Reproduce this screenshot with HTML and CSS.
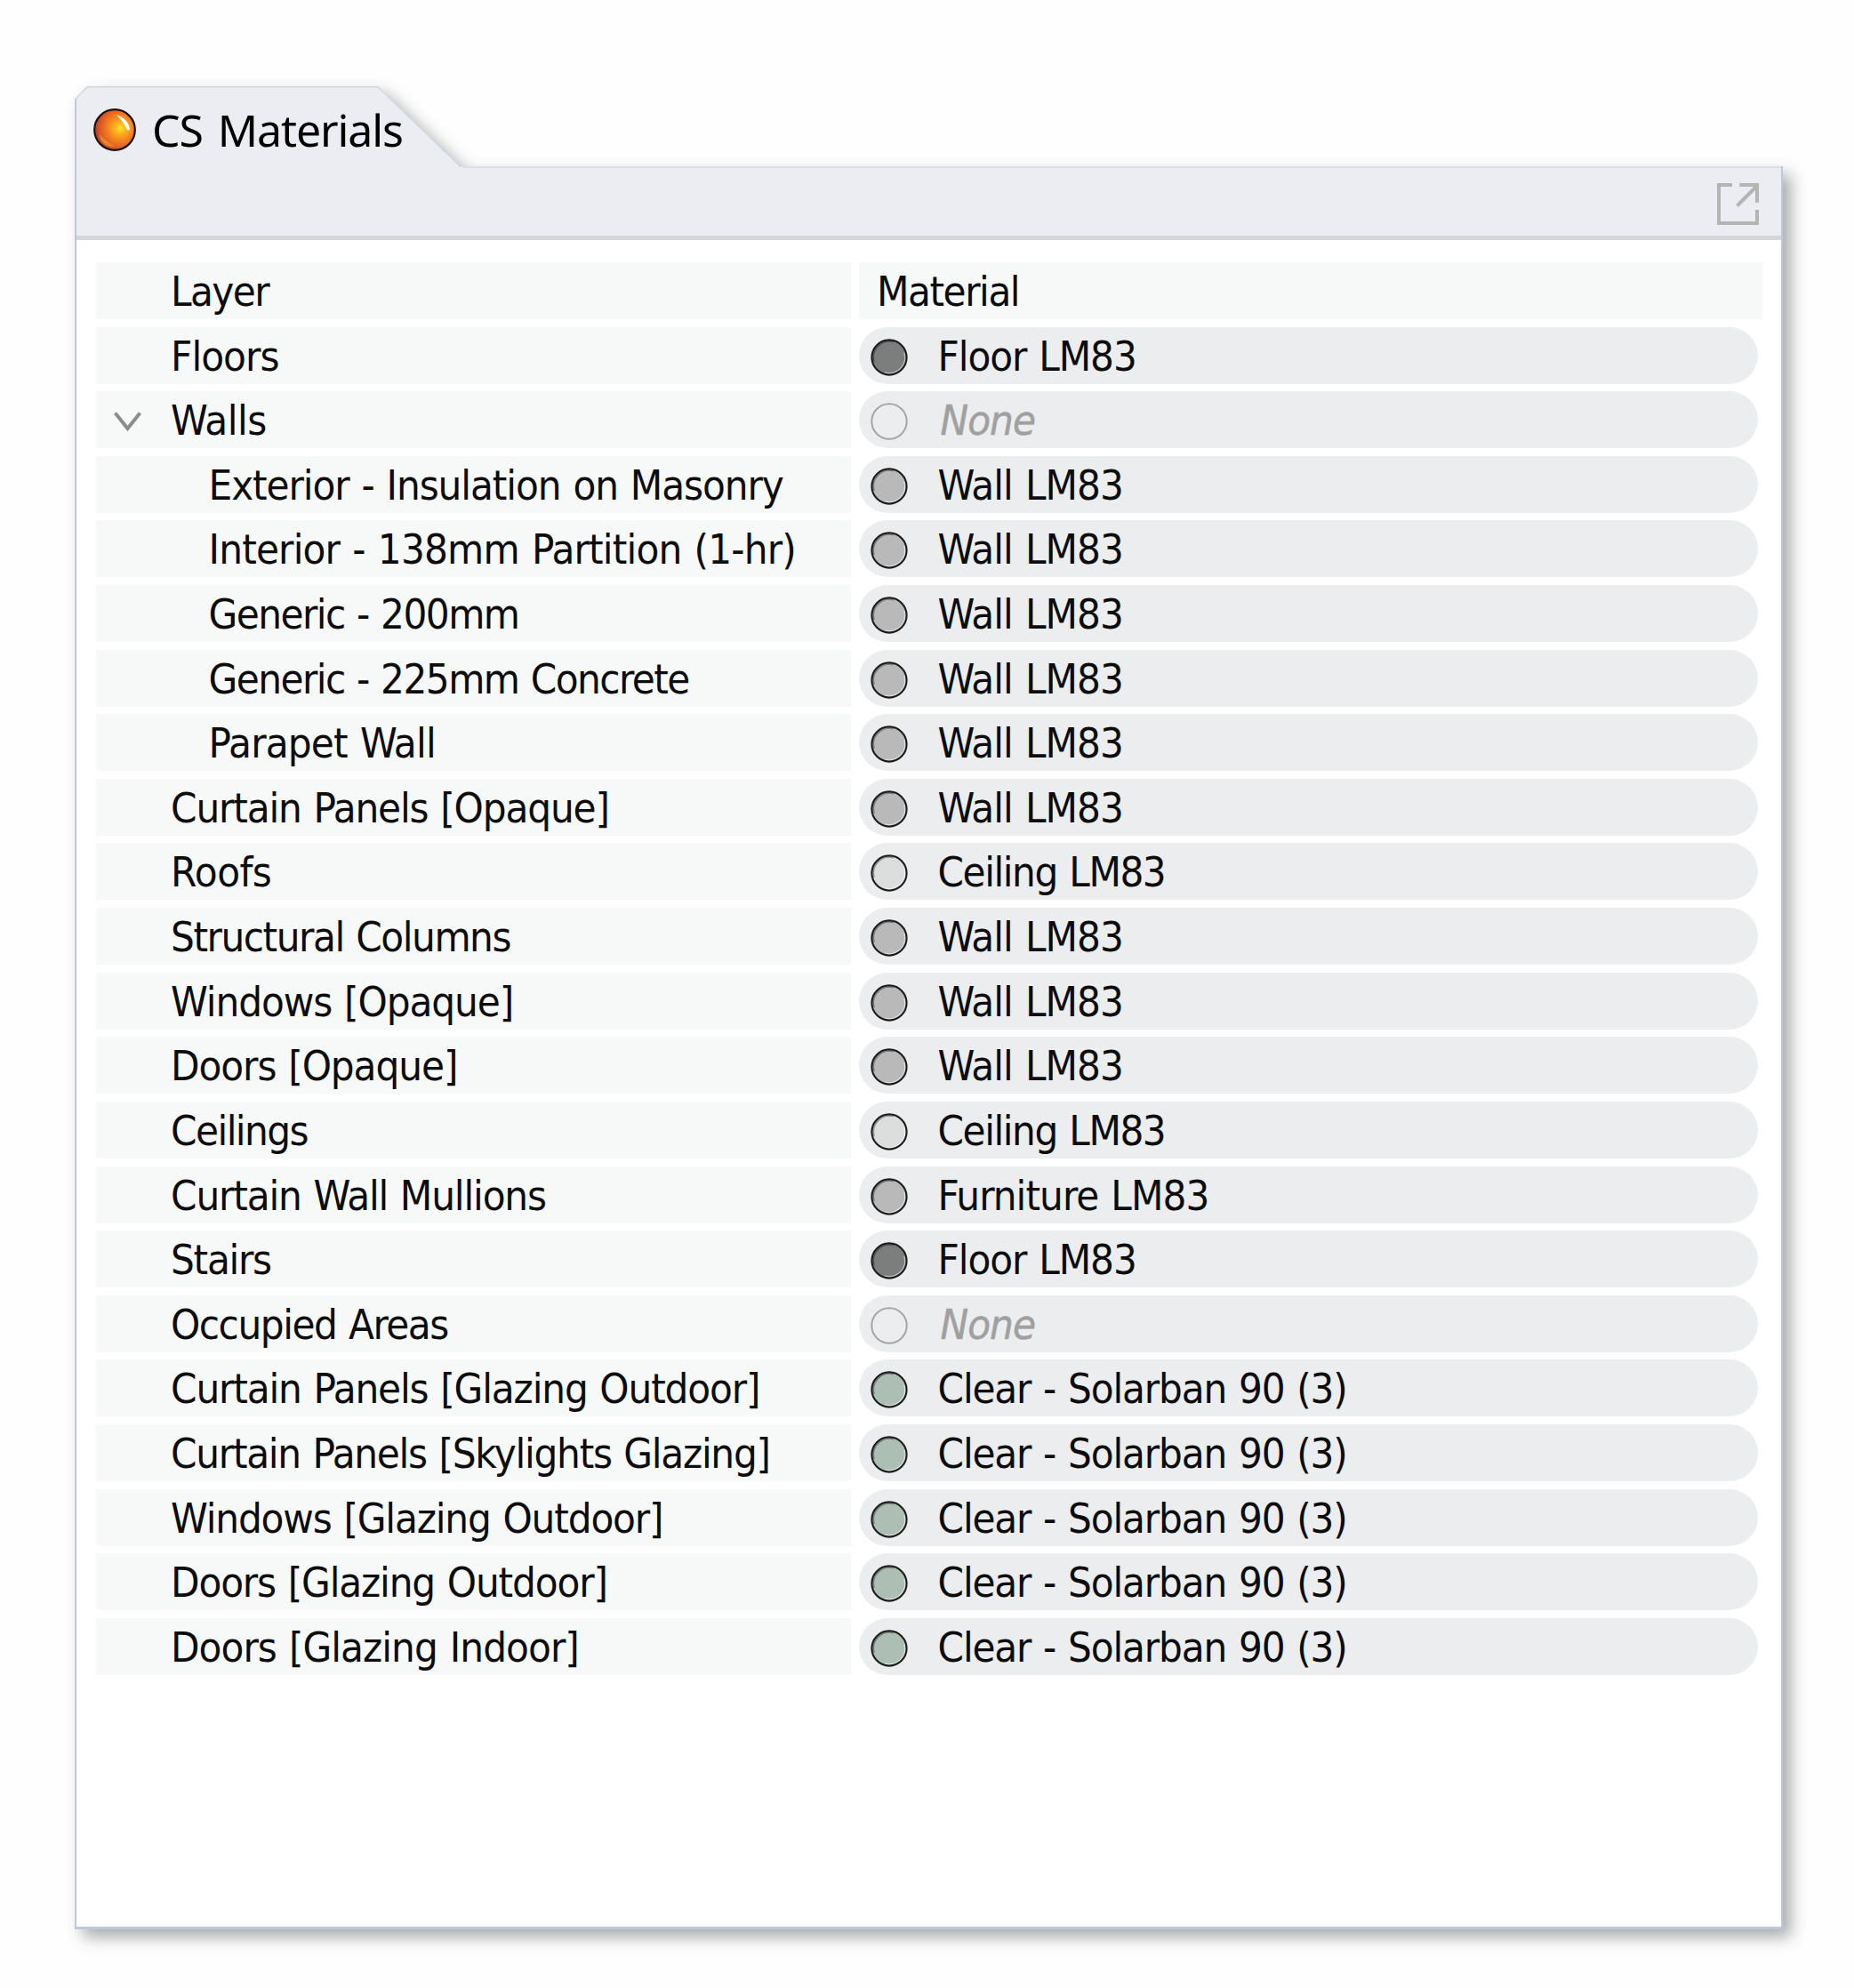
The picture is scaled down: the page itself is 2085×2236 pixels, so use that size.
FILE: index.html
```html
<!DOCTYPE html>
<html lang="en">
<head>
<meta charset="utf-8">
<title>CS Materials</title>
<link rel="stylesheet" href="styles.css">
</head>
<body>
<svg class="defs" width="0" height="0" aria-hidden="true">
  <defs>
    <radialGradient id="orb" cx="0.64" cy="0.46" r="0.62">
      <stop offset="0" stop-color="#ffe328"/>
      <stop offset="0.22" stop-color="#fcb21c"/>
      <stop offset="0.5" stop-color="#f5821f"/>
      <stop offset="0.8" stop-color="#dc5a26"/>
      <stop offset="1" stop-color="#b8402a"/>
    </radialGradient>
    <symbol id="swatch" viewBox="0 0 42 42">
      <circle cx="21" cy="21" r="19.3" fill="currentColor"/>
      <path d="M38 16 A17.6 17.6 0 0 1 16 38" fill="none" stroke="#fff" stroke-opacity="0.5" stroke-width="1.6"/>
      <path d="M4 26 A18 18 0 0 1 26 3.7" fill="none" stroke="#000" stroke-opacity="0.35" stroke-width="1.6"/>
      <circle cx="21" cy="21" r="19.6" fill="none" stroke="#1c1c1c" stroke-width="2.1"/>
    </symbol>
    <symbol id="swatch-empty" viewBox="0 0 42 42">
      <circle cx="21" cy="21" r="19.7" fill="#ecedee" stroke="#a6a6a6" stroke-width="2"/>
    </symbol>
  </defs>
</svg>
<main class="panel">
  <div class="tab">
    <svg class="tab-shape" viewBox="0 0 436 93" aria-hidden="true">
      <path d="M0 93 V14 L14 0 H341 L434 90 H436 V93 Z" fill="#ecedf3"/>
      <path d="M1 93 V14" fill="none" stroke="#c3c7de" stroke-width="2"/>
      <path d="M1 14 L14 0.8 H341 L434 90.8" fill="none" stroke="#d0d6e4" stroke-width="1.6"/>
    </svg>
    <svg class="orb" viewBox="0 0 48 48" aria-hidden="true">
      <circle cx="24" cy="24" r="22.8" fill="url(#orb)" stroke="#1b1310" stroke-width="2.2"/>
      <path d="M26 7.5 C33 8.5 40 15 41 23 C40 25 38.5 25 37.5 23.5 C35 17 31 12 26 7.5 Z" fill="#fff" opacity="0.95"/>
      <path d="M6.5 28.5 C11 34 17 38.5 24 42.5 C15 44 7.5 38 6.5 28.5 Z" fill="#e8862a"/>
    </svg>
    <h1 class="title">CS Materials</h1>
  </div>
  <div class="body">
    <div class="toolbar">
      <svg class="popout" viewBox="0 0 47 47" fill="none" stroke="#b3b5b5" stroke-width="4" aria-hidden="true">
        <path d="M17 2 H2 V45 H45 V30"/>
        <path d="M25.3 2 H45 V21.7"/>
        <path d="M22.5 25.5 L44 4"/>
      </svg>
    </div>
    <div class="table">
      <div class="row"><div class="layer h">Layer</div><div class="head f">Material</div></div>
      <div class="row"><div class="layer">Floors</div><div class="pill floor d"><svg><use href="#swatch"/></svg><span>Floor LM83</span></div></div>
      <div class="row"><div class="layer a"><svg class="chevron" viewBox="0 0 31 22" aria-hidden="true"><path d="M1.5 1.5 L15.5 19 L29.5 1.5" fill="none" stroke="#8b8d8c" stroke-width="4"/></svg>Walls</div><div class="pill none"><svg><use href="#swatch-empty"/></svg><span>None</span></div></div>
      <div class="row"><div class="layer sub d">Exterior - Insulation on Masonry</div><div class="pill wall"><svg><use href="#swatch"/></svg><span>Wall LM83</span></div></div>
      <div class="row"><div class="layer sub b">Interior - 138mm Partition (1-hr)</div><div class="pill wall"><svg><use href="#swatch"/></svg><span>Wall LM83</span></div></div>
      <div class="row"><div class="layer sub h">Generic - 200mm</div><div class="pill wall"><svg><use href="#swatch"/></svg><span>Wall LM83</span></div></div>
      <div class="row"><div class="layer sub h">Generic - 225mm Concrete</div><div class="pill wall"><svg><use href="#swatch"/></svg><span>Wall LM83</span></div></div>
      <div class="row"><div class="layer sub b">Parapet Wall</div><div class="pill wall"><svg><use href="#swatch"/></svg><span>Wall LM83</span></div></div>
      <div class="row"><div class="layer g">Curtain Panels [Opaque]</div><div class="pill wall"><svg><use href="#swatch"/></svg><span>Wall LM83</span></div></div>
      <div class="row"><div class="layer a">Roofs</div><div class="pill ceiling f"><svg><use href="#swatch"/></svg><span>Ceiling LM83</span></div></div>
      <div class="row"><div class="layer f">Structural Columns</div><div class="pill wall"><svg><use href="#swatch"/></svg><span>Wall LM83</span></div></div>
      <div class="row"><div class="layer d">Windows [Opaque]</div><div class="pill wall"><svg><use href="#swatch"/></svg><span>Wall LM83</span></div></div>
      <div class="row"><div class="layer d">Doors [Opaque]</div><div class="pill wall"><svg><use href="#swatch"/></svg><span>Wall LM83</span></div></div>
      <div class="row"><div class="layer h">Ceilings</div><div class="pill ceiling f"><svg><use href="#swatch"/></svg><span>Ceiling LM83</span></div></div>
      <div class="row"><div class="layer g">Curtain Wall Mullions</div><div class="pill wall"><svg><use href="#swatch"/></svg><span>Furniture LM83</span></div></div>
      <div class="row"><div class="layer e">Stairs</div><div class="pill floor d"><svg><use href="#swatch"/></svg><span>Floor LM83</span></div></div>
      <div class="row"><div class="layer f">Occupied Areas</div><div class="pill none"><svg><use href="#swatch-empty"/></svg><span>None</span></div></div>
      <div class="row"><div class="layer g">Curtain Panels [Glazing Outdoor]</div><div class="pill glass g"><svg><use href="#swatch"/></svg><span>Clear - Solarban 90 (3)</span></div></div>
      <div class="row"><div class="layer e">Curtain Panels [Skylights Glazing]</div><div class="pill glass g"><svg><use href="#swatch"/></svg><span>Clear - Solarban 90 (3)</span></div></div>
      <div class="row"><div class="layer g">Windows [Glazing Outdoor]</div><div class="pill glass g"><svg><use href="#swatch"/></svg><span>Clear - Solarban 90 (3)</span></div></div>
      <div class="row"><div class="layer g">Doors [Glazing Outdoor]</div><div class="pill glass g"><svg><use href="#swatch"/></svg><span>Clear - Solarban 90 (3)</span></div></div>
      <div class="row"><div class="layer">Doors [Glazing Indoor]</div><div class="pill glass g"><svg><use href="#swatch"/></svg><span>Clear - Solarban 90 (3)</span></div></div>
    </div>
  </div>
</main>
</body>
</html>
```
FILE: styles.css
```css
* { box-sizing: border-box; }

body {
  margin: 0;
  padding: 97px 80px 66px 84px;
  height: 2236px;
  background: #fefefe;
  color: #0c0c0c;
  font: 47px/66px "DejaVu Sans Condensed", "DejaVu Sans", sans-serif;
  font-stretch: condensed;
  letter-spacing: -0.95px;
  word-spacing: 1.5px;
}

.defs { position: absolute; }

.panel {
  display: flex;
  flex-direction: column;
  width: 1921px;
  height: 2073px;
  filter: drop-shadow(9px 9px 9px rgba(20, 26, 24, 0.36));
}

/* Tab with its cut corners */
.tab {
  position: relative;
  display: flex;
  align-items: flex-start;
  height: 90px;
  padding-left: 21px;
}

.tab-shape {
  position: absolute;
  left: 0;
  top: 0;
  width: 436px;
  height: 93px;
  z-index: 1;
}

.orb {
  position: relative;
  z-index: 2;
  width: 48px;
  height: 48px;
  margin-top: 25px;
}

.title {
  position: relative;
  z-index: 2;
  margin: 15px 0 0 18px;
  font: 400 50px/68px "Noto Sans", sans-serif;
  letter-spacing: -1.1px;
  word-spacing: 5px;
  color: #000;
}

.body {
  flex: 1;
  border: solid #c0c7dd;
  border-width: 0 2px 3px;
  background: #fff;
}

.toolbar {
  display: flex;
  justify-content: flex-end;
  height: 83px;
  padding: 17px 25px 0 0;
  border-top: 2px solid #dadfea;
  border-bottom: 5px solid #d5d6d9;
  background: #ecedf3;
}

.popout { width: 47px; height: 47px; }

.table {
  display: flex;
  flex-direction: column;
  gap: 8.62px;
  padding: 25px 21px 0 22px;
}

.row {
  display: grid;
  grid-template: 64px / 849px 1016px;
  gap: 9px;
  height: 64px;
  white-space: nowrap;
}

.layer, .head { background: #f7f9f8; }
.layer { position: relative; padding-left: 84px; }
.layer.sub { padding-left: 126.5px; }
.head { padding-left: 20px; }

.chevron {
  position: absolute;
  left: 20px;
  top: 23px;
  width: 31px;
  height: 22px;
}

.pill {
  display: flex;
  width: 1011px;
  padding-left: 13px;
  border-radius: 32px;
  background: #ebedee;
}

.pill svg {
  width: 42px;
  height: 42px;
  margin: 13px 33.5px 0 0;
}

.pill span { color: #0c0c0c; }

.floor { color: #7c7e7d; }
.wall { color: #b9b9b9; }
.ceiling { color: #dcdddd; }
.glass { color: #adbfb4; }

.none span {
  margin-left: 3px;
  color: #a0a0a0;
  font-style: italic;
  -webkit-text-stroke: 0.5px #a0a0a0;
}

/* Tracking steps */
.a { letter-spacing: -0.5px; }
.b { letter-spacing: -0.82px; }
.d { letter-spacing: -1.07px; }
.g { letter-spacing: -1.15px; }
.e { letter-spacing: -1.27px; }
.f { letter-spacing: -1.45px; }
.h { letter-spacing: -1.55px; }
```
